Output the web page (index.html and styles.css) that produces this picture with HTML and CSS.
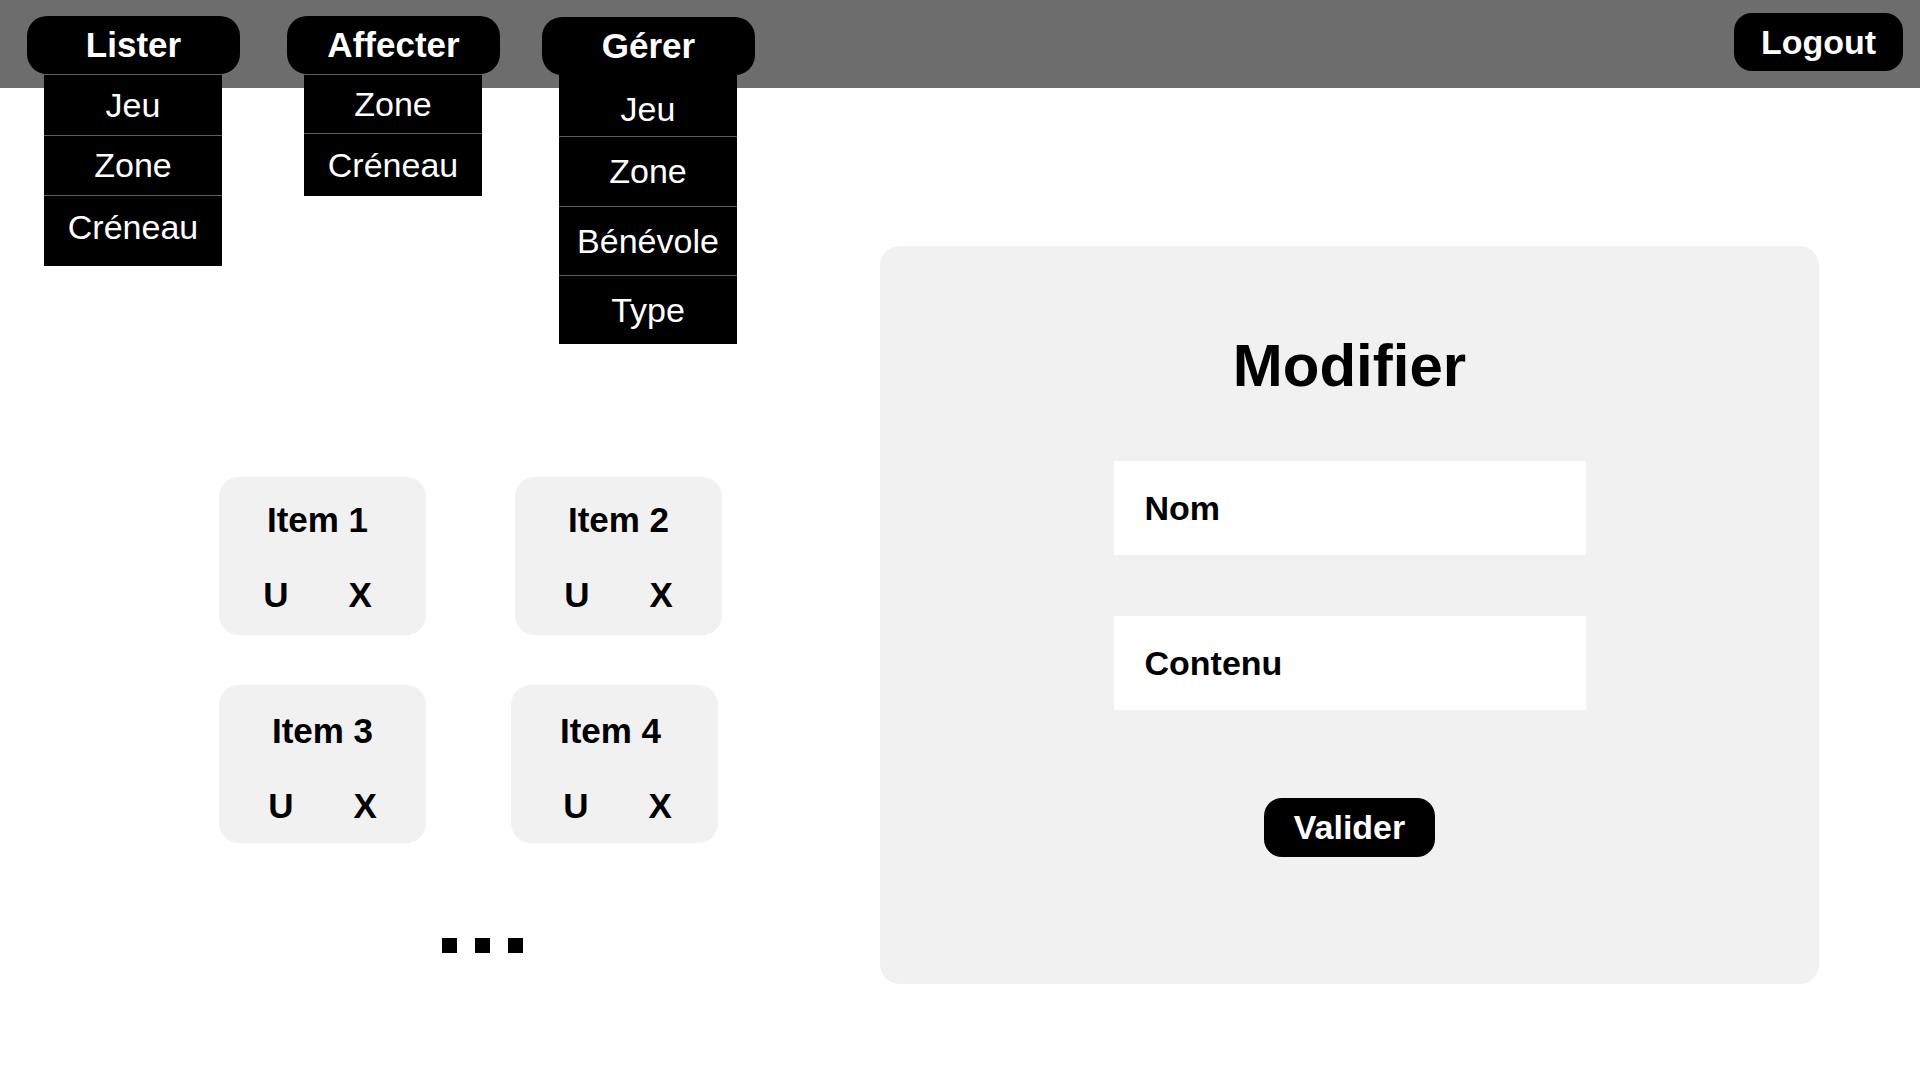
FILE: index.html
```html
<!DOCTYPE html>
<html lang="fr">
<head>
<meta charset="utf-8">
<title>Modifier</title>
<link rel="stylesheet" href="styles.css">
</head>
<body>
<header class="topbar">
  <nav class="menus">
    <div class="menu">
      <div class="menu-btn">Lister</div>
      <ul class="dropdown">
        <li class="dd-item h61">Jeu</li>
        <li class="dd-item h60">Zone</li>
        <li class="dd-item h71">Créneau</li>
      </ul>
    </div>
    <div class="menu menu-mid">
      <div class="menu-btn">Affecter</div>
      <ul class="dropdown">
        <li class="dd-item h59">Zone</li>
        <li class="dd-item h63">Créneau</li>
      </ul>
    </div>
    <div class="menu menu-low">
      <div class="menu-btn">Gérer</div>
      <ul class="dropdown dropdown-plain">
        <li class="dd-item h61 lower">Jeu</li>
        <li class="dd-item h70">Zone</li>
        <li class="dd-item h69">Bénévole</li>
        <li class="dd-item h69">Type</li>
      </ul>
    </div>
  </nav>
  <div class="logout">Logout</div>
</header>
<main class="content">
  <section class="items">
    <div class="grid">
      <div class="card card-left"><div class="card-title">Item 1</div><div class="card-actions"><span>U</span><span>X</span></div></div>
      <div class="card"><div class="card-title">Item 2</div><div class="card-actions"><span>U</span><span>X</span></div></div>
      <div class="card card-low"><div class="card-title">Item 3</div><div class="card-actions"><span>U</span><span>X</span></div></div>
      <div class="card card-low card-shift"><div class="card-title">Item 4</div><div class="card-actions"><span>U</span><span>X</span></div></div>
    </div>
    <div class="dots"><span></span><span></span><span></span></div>
  </section>
  <section class="panel">
    <h1 class="panel-title">Modifier</h1>
    <div class="field">Nom</div>
    <div class="field field-second">Contenu</div>
    <button class="submit" type="button">Valider</button>
  </section>
</main>
</body>
</html>
```
FILE: styles.css
```css
html, body {
  margin: 0;
  padding: 0;
  background: #ffffff;
}
body {
  font-family: "Liberation Sans", Arial, sans-serif;
  color: #000;
  width: 1920px;
  height: 1080px;
  overflow: hidden;
}
.topbar {
  position: relative;
  z-index: 2;
  height: 88px;
  background: #6d6d6d;
  display: flex;
  align-items: flex-start;
  padding: 16px 17px 0 27px;
  box-sizing: border-box;
}
.menus {
  display: flex;
}
.menu {
  position: relative;
  width: 213px;
}
.menu-mid {
  margin-left: 47px;
}
.menu-low {
  margin-left: 42px;
  margin-top: 1px;
}
.menu-btn {
  height: 58px;
  background: #000;
  color: #fff;
  border-radius: 20px;
  font-weight: bold;
  font-size: 35px;
  display: flex;
  align-items: center;
  justify-content: center;
}
.dropdown {
  position: absolute;
  top: 58px;
  left: 17px;
  width: 178px;
  margin: 0;
  padding: 0;
  list-style: none;
  background: #000;
}
.dd-item {
  box-sizing: border-box;
  border-top: 1px solid #5e5e5e;
  color: #fff;
  font-size: 34px;
  display: flex;
  align-items: center;
  justify-content: center;
}
.dropdown-plain .dd-item:first-child {
  border-top-color: #000;
}
.lower {
  padding-top: 6px;
}
.h59 { height: 59px; }
.h60 { height: 60px; }
.h61 { height: 61px; }
.h63 { height: 63px; }
.h69 { height: 69px; }
.h70 { height: 70px; }
.h71 { height: 71px; padding-bottom: 8px; }
.logout {
  margin-left: auto;
  margin-top: -3px;
  width: 169px;
  height: 58px;
  border-radius: 18px;
  background: #000;
  color: #fff;
  font-weight: bold;
  font-size: 34px;
  display: flex;
  align-items: center;
  justify-content: center;
}
.content {
  display: flex;
  align-items: flex-start;
  padding: 158px 0 0 219px;
}
.items {
  width: 661px;
  padding-top: 231px;
}
.grid {
  display: grid;
  grid-template-columns: 207px 207px;
  column-gap: 89px;
  row-gap: 50px;
}
.card {
  width: 207px;
  height: 158px;
  background: #f1f1f1;
  border-radius: 20px;
  padding-top: 23px;
  box-sizing: border-box;
}
.card-low {
  padding-top: 26px;
}
.card-left {
  padding-right: 10px;
}
.card-shift {
  margin-left: -4px;
}
.card-shift .card-title {
  padding-right: 8px;
}
.card-shift .card-actions {
  padding-left: 6px;
}
.card-title {
  font-size: 35px;
  font-weight: bold;
  line-height: 40px;
  text-align: center;
}
.card-actions {
  display: flex;
  justify-content: center;
  gap: 60px;
  margin-top: 35px;
  font-size: 35px;
  font-weight: bold;
  line-height: 40px;
}
.dots {
  display: flex;
  gap: 18px;
  margin: 95px 0 0 223px;
}
.dots span {
  width: 15px;
  height: 15px;
  background: #000;
}
.panel {
  width: 939px;
  height: 738px;
  background: #f1f1f1;
  border-radius: 20px;
  display: flex;
  flex-direction: column;
  align-items: center;
  padding-top: 85px;
  box-sizing: border-box;
}
.panel-title {
  margin: 0;
  font-size: 60px;
  line-height: 70px;
  font-weight: bold;
}
.field {
  width: 472px;
  height: 94px;
  margin-top: 60px;
  background: #fff;
  display: flex;
  align-items: center;
  padding: 1px 0 0 31px;
  box-sizing: border-box;
  font-size: 34px;
  font-weight: bold;
}
.field-second {
  margin-top: 61px;
}
.submit {
  margin-top: 88px;
  width: 171px;
  height: 59px;
  border: 0;
  padding: 0;
  border-radius: 18px;
  background: #000;
  color: #fff;
  font-family: "Liberation Sans", Arial, sans-serif;
  font-weight: bold;
  font-size: 34px;
}
```
